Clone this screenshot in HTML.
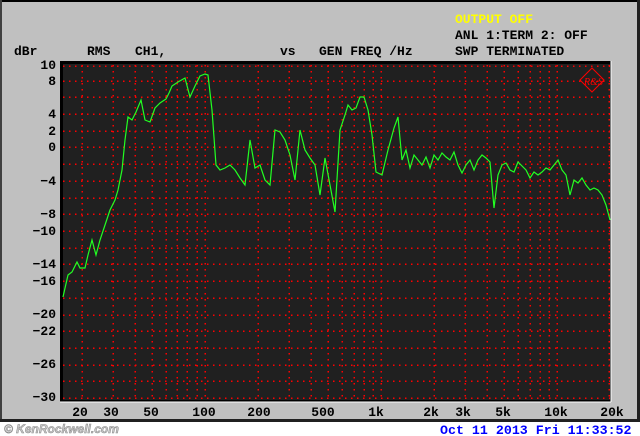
<!DOCTYPE html>
<html><head><meta charset="utf-8"><style>
html,body{margin:0;padding:0;width:640px;height:436px;overflow:hidden;background:#fff}
svg{display:block}
text{font-family:"Liberation Mono",monospace;font-size:13px;font-weight:bold}
</style></head><body>
<svg width="640" height="436" viewBox="0 0 640 436">
<rect x="0" y="0" width="640" height="436" fill="#fff"/>
<rect x="0" y="0" width="638" height="421" fill="#c0c0c0"/>
<rect x="0" y="0" width="640" height="2" fill="#000"/>
<rect x="0" y="0" width="2" height="421" fill="#404040"/>
<rect x="637" y="0" width="3" height="422" fill="#202020"/>
<rect x="0" y="419" width="640" height="3" fill="#202020"/>
<rect x="60" y="61" width="551" height="341" fill="#000"/>
<rect x="63" y="64" width="547" height="336" fill="#202020"/>
<line x1="611" y1="61" x2="611" y2="402" stroke="#fff" stroke-width="1"/>
<line x1="60" y1="402" x2="611" y2="402" stroke="#fff" stroke-width="1"/>
<g stroke="#ff0000" stroke-width="1.5" stroke-dasharray="1.5 4.5" shape-rendering="crispEdges">
<line x1="63" y1="81" x2="610" y2="81"/><line x1="63" y1="97" x2="610" y2="97"/>
<line x1="63" y1="114" x2="610" y2="114"/><line x1="63" y1="131" x2="610" y2="131"/>
<line x1="63" y1="147" x2="610" y2="147"/><line x1="63" y1="164" x2="610" y2="164"/>
<line x1="63" y1="181" x2="610" y2="181"/><line x1="63" y1="198" x2="610" y2="198"/>
<line x1="63" y1="214" x2="610" y2="214"/><line x1="63" y1="231" x2="610" y2="231"/>
<line x1="63" y1="248" x2="610" y2="248"/><line x1="63" y1="264" x2="610" y2="264"/>
<line x1="63" y1="281" x2="610" y2="281"/><line x1="63" y1="298" x2="610" y2="298"/>
<line x1="63" y1="315" x2="610" y2="315"/><line x1="63" y1="331" x2="610" y2="331"/>
<line x1="63" y1="348" x2="610" y2="348"/><line x1="63" y1="365" x2="610" y2="365"/>
<line x1="63" y1="381" x2="610" y2="381"/><line x1="63" y1="398" x2="610" y2="398"/>
<line x1="63" y1="66" x2="610" y2="66"/>
<line x1="82" y1="65" x2="82" y2="400"/><line x1="113" y1="65" x2="113" y2="400"/>
<line x1="135" y1="65" x2="135" y2="400"/><line x1="152" y1="65" x2="152" y2="400"/>
<line x1="166" y1="65" x2="166" y2="400"/><line x1="177" y1="65" x2="177" y2="400"/>
<line x1="187" y1="65" x2="187" y2="400"/><line x1="197" y1="65" x2="197" y2="400"/>
<line x1="205" y1="65" x2="205" y2="400"/><line x1="258" y1="65" x2="258" y2="400"/>
<line x1="289" y1="65" x2="289" y2="400"/><line x1="311" y1="65" x2="311" y2="400"/>
<line x1="328" y1="65" x2="328" y2="400"/><line x1="342" y1="65" x2="342" y2="400"/>
<line x1="354" y1="65" x2="354" y2="400"/><line x1="364" y1="65" x2="364" y2="400"/>
<line x1="373" y1="65" x2="373" y2="400"/><line x1="381" y1="65" x2="381" y2="400"/>
<line x1="434" y1="65" x2="434" y2="400"/><line x1="465" y1="65" x2="465" y2="400"/>
<line x1="487" y1="65" x2="487" y2="400"/><line x1="504" y1="65" x2="504" y2="400"/>
<line x1="518" y1="65" x2="518" y2="400"/><line x1="530" y1="65" x2="530" y2="400"/>
<line x1="540" y1="65" x2="540" y2="400"/><line x1="549" y1="65" x2="549" y2="400"/>
<line x1="557" y1="65" x2="557" y2="400"/><line x1="609" y1="65" x2="609" y2="400"/>
</g>
<g fill="none" stroke="#ff0000" stroke-width="1">
<polygon points="592,68 604,80 592,92 580,80"/>
<text x="584" y="85" fill="#ff0000" stroke="none" style="font-size:10px;font-weight:normal;font-family:'Liberation Serif',serif;font-style:italic">R&amp;S</text>
</g>
<polyline fill="none" stroke="#22ff22" stroke-width="1.2" points="63,297 68,275 72,272 77,262 80,268 85,268 88,255 92,240 96,255 100,240 105,225 110,210 115,200 118,190 122,170 125,140 128,117 132,120 136,112 141,100 145,120 150,122 155,108 160,103 166,99 169,93 172,86 178,82 185,78 190,97 195,86 200,76 205,74 208,75 212,110 216,165 220,170 225,168 230,165 235,170 240,178 245,185 250,140 255,168 260,165 265,180 270,185 275,130 280,132 285,140 290,155 295,180 300,130 305,150 310,158 315,165 320,195 325,158 330,185 335,212 340,130 345,115 348,105 352,110 356,108 360,97 364,97 368,110 372,135 376,172 382,175 388,150 394,128 398,117 402,160 406,150 410,168 414,155 418,160 422,165 426,157 430,168 434,155 438,160 442,153 446,157 450,160 454,152 458,165 462,173 466,165 470,160 474,170 478,160 482,155 486,158 490,162 494,208 498,175 502,165 506,163 510,170 514,172 518,162 522,166 526,170 530,178 534,172 538,175 542,172 546,168 550,170 554,165 558,160 562,170 566,175 570,195 574,180 578,183 582,178 586,185 590,190 594,188 598,190 602,195 606,205 610,220"/>
<text x="455" y="23" fill="#ffff00">OUTPUT OFF</text>
<text x="455" y="39" fill="#000">ANL 1:TERM 2: OFF</text>
<text x="455" y="55" fill="#000">SWP TERMINATED</text>
<text x="14" y="55" fill="#000">dBr</text>
<text x="87" y="55" fill="#000">RMS</text>
<text x="135" y="55" fill="#000">CH1,</text>
<text x="280" y="55" fill="#000">vs</text>
<text x="319" y="55" fill="#000">GEN FREQ /Hz</text>
<g fill="#000" text-anchor="end">
<text x="56" y="69">10</text><text x="56" y="85">8</text>
<text x="56" y="118">4</text><text x="56" y="135">2</text>
<text x="56" y="151">0</text><text x="56" y="185">−4</text>
<text x="56" y="218">−8</text><text x="56" y="235">−10</text>
<text x="56" y="268">−14</text><text x="56" y="285">−16</text>
<text x="56" y="318">−20</text><text x="56" y="335">−22</text>
<text x="56" y="368">−26</text><text x="56" y="401">−30</text>
</g>
<g fill="#000" text-anchor="middle">
<text x="80" y="416">20</text><text x="111" y="416">30</text>
<text x="151" y="416">50</text><text x="204" y="416">100</text>
<text x="259" y="416">200</text><text x="323" y="416">500</text>
<text x="376" y="416">1k</text><text x="431" y="416">2k</text>
<text x="463" y="416">3k</text><text x="503" y="416">5k</text>
<text x="556" y="416">10k</text><text x="612" y="416">20k</text>
</g>
<text x="4" y="433" fill="#c8c8c8" stroke="#888" stroke-width="0.5" style="font-family:'Liberation Sans',sans-serif;font-size:12px;font-style:italic;font-weight:bold">© KenRockwell.com</text>
<text x="440" y="434" fill="#0000ff" style="font-size:13.3px">Oct 11 2013 Fri 11:33:52</text>
</svg>
</body></html>
